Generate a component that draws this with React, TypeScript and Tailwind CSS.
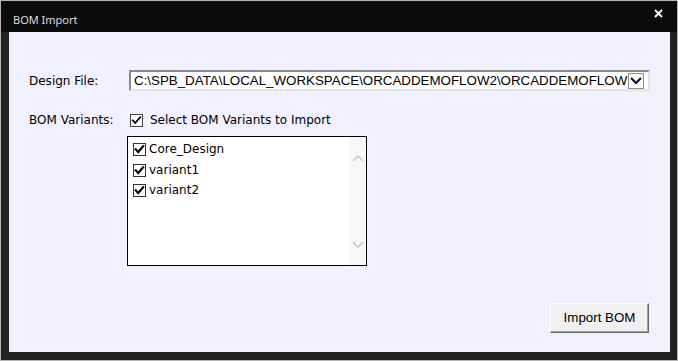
import React from 'react';

const uiFont = { fontFamily: '"DejaVu Sans", Verdana, sans-serif' };
const arialFont = { fontFamily: '"Liberation Sans", Arial, sans-serif' };

const CheckBox = ({ bold = false }: { bold?: boolean }) => (
  <svg width="13" height="13" viewBox="0 0 13 13" className="shrink-0">
    <rect x="0.5" y="0.5" width="12" height="12" fill="#fff" stroke={bold ? '#333' : '#444'} />
    <path
      d="M2.8 6.4 L5.2 9 L10.2 3.2"
      fill="none"
      stroke="#000"
      strokeWidth={bold ? 2.2 : 1.8}
      strokeLinecap="square"
    />
  </svg>
);

const Chevron = ({ up = false, color = '#c9c9c9', weight = 1.6 }: { up?: boolean; color?: string; weight?: number }) => (
  <svg width="12" height="8" viewBox="0 0 12 8">
    <polyline
      points={up ? '1,7 6,2 11,7' : '1,1 6,6 11,1'}
      fill="none"
      stroke={color}
      strokeWidth={weight}
    />
  </svg>
);

const variants = ['Core_Design', 'variant1', 'variant2'];

export default function App() {
  return (
    <div className="h-[361px] w-[678px] bg-[#b4b4b4] pl-px pt-px">
      <div className="flex h-[359px] w-[676px] flex-col bg-[#222222]">
        {/* title bar */}
        <div className="flex h-[31px] shrink-0 items-start justify-between bg-[#0b0b0b]">
          <span
            className="pl-[12px] pt-[11px] text-[11px] leading-[15px] text-[#dedede]"
            style={{ fontFamily: '"Noto Sans", "Open Sans", sans-serif' }}
          >
            BOM Import
          </span>
          <div className="pr-[14px] pt-[8px]">
            <svg width="9" height="9" viewBox="0 0 9 9">
              <path d="M1 1 L8 8 M8 1 L1 8" stroke="#fff" strokeWidth="1.8" />
            </svg>
          </div>
        </div>

        {/* client area */}
        <div className="ml-[8px] flex h-[320px] w-[661px] flex-col bg-[#f0f0ff] pl-[20px] pt-[38px] text-[12px] text-black" style={uiFont}>
          <div className="flex h-[21px] items-center">
            <span className="w-[100px]">Design File:</span>
            <div className="flex h-[21px] w-[521px] items-center border-2 border-b-[#e3e3e3] border-l-[#8a8a8a] border-r-[#e3e3e3] border-t-[#8a8a8a] bg-white">
              <span
                className="min-w-0 flex-1 overflow-hidden whitespace-nowrap pl-[3px] text-[13.333px] leading-[17px]"
                style={arialFont}
              >
                C:\SPB_DATA\LOCAL_WORKSPACE\ORCADDEMOFLOW2\ORCADDEMOFLOW2.DSN
              </span>
              <div className="mr-[4px] flex h-[16px] w-[16px] shrink-0 items-center justify-center border border-[#8d8d8d] bg-[#fbfbfb]">
                <Chevron color="#10102a" weight={2.2} />
              </div>
            </div>
          </div>

          <div className="mt-[22px] flex h-[14px] items-center">
            <span className="w-[101px]">BOM Variants:</span>
            <CheckBox />
            <span className="ml-[7px]">Select BOM Variants to Import</span>
          </div>

          <div className="ml-[98px] mt-[9px] flex h-[130px] w-[240px] border border-black bg-white">
            <div className="flex flex-1 flex-col pl-[5px] pt-[6px]">
              {variants.map((v) => (
                <div key={v} className="flex h-[20.5px] items-start">
                  <CheckBox bold />
                  <span className="ml-[3px] -mt-[2px] leading-[16px]">{v}</span>
                </div>
              ))}
            </div>
            <div className="flex w-[17px] flex-col items-center justify-between bg-[#f7f7f7] pb-[16px] pt-[17px]">
              <Chevron up />
              <Chevron />
            </div>
          </div>

          <div className="mb-[19px] mr-[21px] mt-auto flex justify-end">
            <button
              className="h-[30px] w-[99px] border border-b-[#696969] border-l-[#ffffff] border-r-[#696969] border-t-[#ffffff] bg-[#f0f0f0] text-[13.333px] text-black shadow-[inset_-1px_-1px_0_#a0a0a0]"
              style={arialFont}
            >
              Import BOM
            </button>
          </div>
        </div>
      </div>
    </div>
  );
}
